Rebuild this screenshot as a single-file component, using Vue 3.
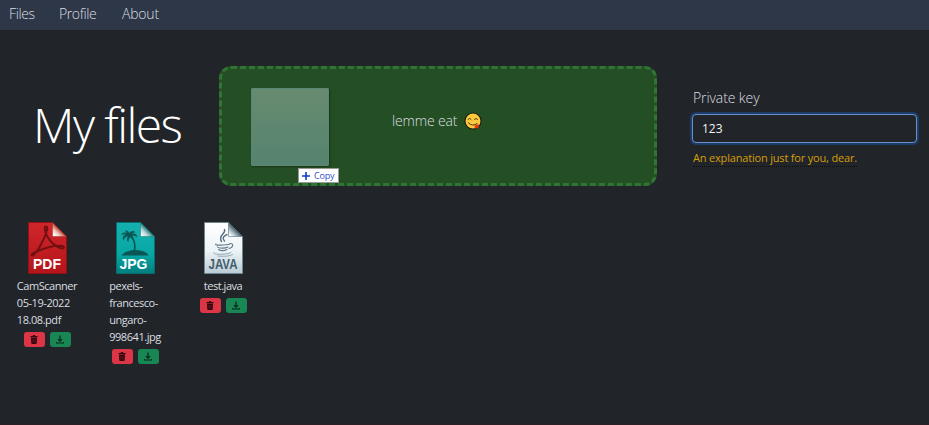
<script setup>
import { ref } from 'vue'

const links = ['Files', 'Profile', 'About']
const privateKey = ref('123')
const files = [
  { type: 'pdf', lines: ['CamScanner', '05-19-2022', '18.08.pdf'] },
  { type: 'jpg', lines: ['pexels-', 'francesco-', 'ungaro-', '998641.jpg'] },
  { type: 'java', lines: ['test.java'] },
]
</script>

<template>
  <div class="page">
    <nav class="nav">
      <a v-for="link in links" :key="link" :class="['link', `link-${link.toLowerCase()}`]">{{ link }}</a>
    </nav>

    <header class="top">
      <h1 class="title">My files</h1>
      <div class="drop">
        <span class="drop-text">lemme eat</span>
        <svg class="emoji" viewBox="0 0 18 18">
          <circle cx="9" cy="9" r="8.600" fill="#171b10" />
          <circle cx="9" cy="9" r="7.500" fill="#ffc83d" />
          <path d="M4 7.300q1.500-2 3 0M10.500 7.300q1.500-2 3 0M4.200 10.600q4 4.600 8.800 1" fill="none" stroke="#4a3610" stroke-width="1" stroke-linecap="round" />
          <path d="M10.500 13.800l2.800-1.600 1.700.5v1.900l-1.400 1.600-1.900.2q-1.600-.8-1.200-2.600z" fill="#e8350f" />
        </svg>
        <div class="ghost"></div>
        <div class="tip">
          <svg class="plus" viewBox="0 0 8 8"><path d="M4 0v8M0 4h8" stroke="#0b3cc4" stroke-width="1.6" /></svg>
          <span>Copy</span>
        </div>
      </div>
      <form class="key" @submit.prevent>
        <label class="label" for="key">Private key</label>
        <input id="key" v-model="privateKey" class="input" type="text" />
        <span class="hint">An explanation just for you, dear.</span>
      </form>
    </header>

    <main class="files">
      <article v-for="file in files" :key="file.type" class="file">
        <svg class="icon" viewBox="0 0 39 52">
          <defs>
            <linearGradient id="red" x2="0" y2="1"><stop stop-color="#d0262b" /><stop offset="1" stop-color="#b3151b" /></linearGradient>
            <linearGradient id="teal" x2="0" y2="1"><stop stop-color="#14b0ae" /><stop offset=".6" stop-color="#08a8a5" /><stop offset="1" stop-color="#007e7d" /></linearGradient>
            <linearGradient id="pale" x2="0" y2="1"><stop stop-color="#ffffff" /><stop offset=".55" stop-color="#eef4f7" /><stop offset="1" stop-color="#b9cbd4" /></linearGradient>
            <linearGradient id="foldRed" x1="0" y1="1" x2="1" y2="0"><stop offset=".1" stop-color="#fff" /><stop offset=".3" stop-color="#f0c4b5" /><stop offset=".52" stop-color="#b33a2b" /></linearGradient>
            <linearGradient id="foldTeal" x1="0" y1="1" x2="1" y2="0"><stop offset=".1" stop-color="#f4f8f8" /><stop offset=".3" stop-color="#b9d2d1" /><stop offset=".52" stop-color="#157b7b" /></linearGradient>
            <linearGradient id="foldPale" x1="0" y1="1" x2="1" y2="0"><stop offset=".1" stop-color="#fff" /><stop offset=".3" stop-color="#a9b9c2" /><stop offset=".52" stop-color="#3c5260" /></linearGradient>
          </defs>
          <template v-if="file.type === 'pdf'">
            <path d="M.5.5H24.500L38.500 14.500V51.500H.5z" fill="url(#red)" stroke="#8d1216" />
            <path d="M24.500.5L38.500 14.500H24.500z" fill="url(#foldRed)" stroke="#a52a24" stroke-width=".5" />
            <path d="M4.500 33.500c3-.5 12-15.500 14.800-26.500 .3-3-2.800-3.500-2.500-.5C17.500 14 24 23.500 33 26.300c3.500.8 4-1.800 1-2.300-6-1-18 1.500-27.500 6.500-3.500 2-3.500 3.500-2 3z" fill="none" stroke="#74100f" stroke-width="2" stroke-linejoin="round" />
            <text class="type" x="19" y="47" textLength="28" lengthAdjust="spacingAndGlyphs">PDF</text>
          </template>
          <template v-else-if="file.type === 'jpg'">
            <path d="M.5.5H24.500L38.500 14.500V51.500H.5z" fill="url(#teal)" stroke="#056d6c" />
            <path d="M24.500.5L38.500 14.500H24.500z" fill="url(#foldTeal)" stroke="#087877" stroke-width=".5" />
            <path d="M5.500 33.500c2-3 7-5 12-5.500 1.500-5 0-10-3.500-13-1 1-1.500 3-1.500 5-2-1-2-4-.5-5.600-2.500 0-4 2-4.500 4.200-1.500-2-.5-5 2.200-6-1.600-.7-3-.4-4.200.6 0-2.600 3-3.400 5-2.200 0-1.500-1-2-1.500-2.300 2.500-.5 4 1 4.300 2.500 1.500-2.600 5-2.800 6-.5-1.500-.4-2.500 0-3.300.9 3-.7 5.500 1 5 3.900-1.200-1.500-3-2.200-4.700-1.900 2.800 4.400 4 9.400 3.200 14.400 6 .3 12 2 13 5.500z" fill="#0b5654" />
            <text class="type" x="17.500" y="47" textLength="28" lengthAdjust="spacingAndGlyphs">JPG</text>
          </template>
          <template v-else>
            <path d="M.5.5H24.500L38.500 14.500V51.500H.5z" fill="url(#pale)" stroke="#6f8693" />
            <path d="M24.500.5L38.500 14.500H24.500z" fill="url(#foldPale)" stroke="#526b79" stroke-width=".6" />
            <g fill="none" stroke-linecap="round">
              <path d="M20.500 7.500c2 4-7 6-3 12M23 12.500c-4 2-5 3.500-2.500 6.500" stroke="#55707f" stroke-width="1.400" />
              <path d="M12 22c-3 1.500 10 1.500 14 0M13.500 25c1 1.500 8 1.500 10.500 0M14.500 27.500c2 1.200 6 1.200 8.500 0M26 21.500c4-.5 3.500 4-1 5" stroke="#607b8a" stroke-width="1.100" />
              <path d="M10 30.500c-3 2.500 14 2.500 17 0M14 34c6 .7 12 .2 14.500-1.500" stroke="#91a9b5" stroke-width="1" />
            </g>
            <text class="type dark" x="19" y="47" textLength="29" lengthAdjust="spacingAndGlyphs">JAVA</text>
          </template>
        </svg>
        <div class="name"><span v-for="line in file.lines" :key="line">{{ line }}</span></div>
        <div class="actions">
          <button class="btn danger" aria-label="Delete">
            <svg viewBox="0 0 8 9"><path d="M.5 1h2.200l.4-1h1.800l.4 1h2.200v1.200h-7zM1 2.700h6L6.700 8.200q-.1.800-1 .8H2.300q-.9 0-1-.8z" fill="#30090e" /><path d="M2.800 4v3.700M4 4v3.700M5.200 4v3.700" stroke="#8c2230" stroke-width=".4" /></svg>
          </button>
          <button class="btn success" aria-label="Download">
            <svg viewBox="0 0 8 9"><path d="M4 .5v5.500M2 4.200l2 2 2-2M.3 7v1h7.400V7" fill="none" stroke="#052618" stroke-width="1.200" /></svg>
          </button>
        </div>
      </article>
    </main>
  </div>
</template>

<style>
body { background: #212529; }
</style>

<style scoped>
.page { height: 425px; box-sizing: border-box; overflow: hidden; background: #212529; border-bottom: 1px solid #2a2127; color: #dcdee0; font-family: "Open Sans", "Noto Sans", sans-serif; font-weight: 350; }
.nav { height: 30px; box-sizing: border-box; padding: 0 9px 3px; display: flex; align-items: center; gap: 24px; background: #2d3748; font-size: 14px; }
.link { white-space: nowrap; }
.link-files { width: 26px; letter-spacing: -.4px; }
.link-profile { width: 39px; letter-spacing: -.4px; }
.link-about { letter-spacing: -.2px; }
.top { display: grid; grid-template-columns: 184px 438px 225px; column-gap: 35px; padding-top: 36px; height: 120px; }
.title { margin: 30px 0 0 33px; font-size: 48px; line-height: 58px; font-weight: 300; letter-spacing: -1.55px; color: #fff; white-space: nowrap; }
.drop { position: relative; box-sizing: border-box; display: flex; align-items: flex-start; padding: 42px 0 0 170px; border: 3px dashed #307534; border-radius: 12px; background: #244e24; font-size: 14px; line-height: 20px; }
.drop-text { width: 67px; white-space: nowrap; letter-spacing: -.15px; }
.emoji { width: 18px; height: 18px; margin: 1px 0 0 5px; }
.ghost { position: absolute; left: 29px; top: 19px; width: 78px; height: 78px; border-radius: 2px; background: linear-gradient(#688b70, #55836f); box-shadow: inset 0 0 0 1px #5b8775, 1px 1px 2px #173619; }
.tip { position: absolute; left: 76px; top: 99px; width: 41px; height: 15px; box-sizing: border-box; border: 1px solid #999; background: #fff; color: #3450c8; display: flex; align-items: center; gap: 4px; padding-left: 3px; font-size: 9px; font-weight: 400; line-height: 12px; letter-spacing: -.2px; }
.plus { width: 8px; height: 8px; }
.key { display: flex; flex-direction: column; align-items: flex-start; padding-top: 22px; }
.label { margin-left: 1px; font-size: 14px; line-height: 20px; letter-spacing: -.1px; }
.input { width: 225px; height: 29px; box-sizing: border-box; margin-top: 6px; padding: 0 9px; border: 1px solid #6990cb; border-radius: 4px; outline: none; box-shadow: 0 0 0 2px #1d3b69; background: #212529; color: #f2f3f4; font: 400 12px "Open Sans", sans-serif; }
.hint { margin: 7px 0 0 1px; height: 16px; border-bottom: 1px dotted #0c0e10; color: #d69e08; font-size: 11px; line-height: 15px; font-weight: 400; white-space: nowrap; letter-spacing: -.18px; }
.files { display: flex; align-items: flex-start; padding: 36px 0 0 3px; }
.file { width: 88px; display: flex; flex-direction: column; align-items: center; }
.icon { width: 39px; height: 52px; }
.type { font: 700 14px "Liberation Sans", sans-serif; fill: #fff; text-anchor: middle; }
.type.dark { fill: #435d6c; }
.name { margin-top: 3px; display: flex; flex-direction: column; font-size: 11px; line-height: 17px; font-weight: 400; letter-spacing: -.45px; white-space: nowrap; }
.actions { display: flex; gap: 5px; margin-top: 4px; }
.btn { width: 21px; height: 15px; padding: 0; border: 0; border-radius: 3px; display: flex; align-items: center; justify-content: center; }
.btn svg { width: 8px; height: 9px; }
.danger { background: #dc3545; }
.success { background: #198754; }
</style>
